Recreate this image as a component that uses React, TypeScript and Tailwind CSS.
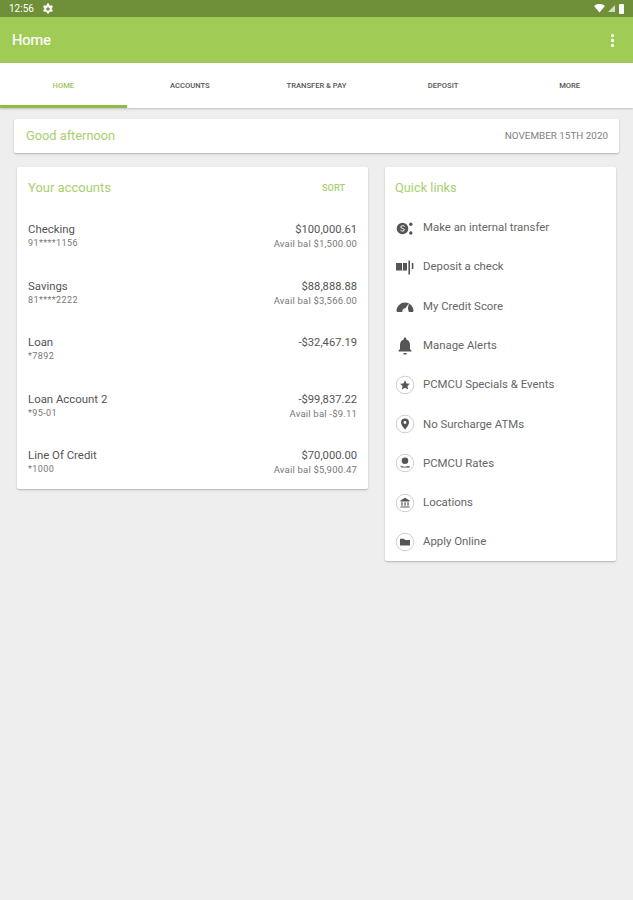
import { MoreVertical } from 'lucide-react';
import type { ReactNode } from 'react';

const TABS = ['HOME', 'ACCOUNTS', 'TRANSFER & PAY', 'DEPOSIT', 'MORE'];

const ACCOUNTS = [
  { name: 'Checking', num: '91****1156', amount: '$100,000.61', avail: 'Avail bal $1,500.00' },
  { name: 'Savings', num: '81****2222', amount: '$88,888.88', avail: 'Avail bal $3,566.00' },
  { name: 'Loan', num: '*7892', amount: '-$32,467.19', avail: '' },
  { name: 'Loan Account 2', num: '*95-01', amount: '-$99,837.22', avail: 'Avail bal -$9.11' },
  { name: 'Line Of Credit', num: '*1000', amount: '$70,000.00', avail: 'Avail bal $5,900.47' },
];

const Ring = ({ children }: { children: ReactNode }) => (
  <svg viewBox="0 0 20 20" className="w-5 h-5 text-[#555]" fill="currentColor">
    <circle cx="10" cy="10" r="8.8" fill="none" stroke="#c8c8c8" strokeWidth="0.9" />
    {children}
  </svg>
);

const LINKS: { label: string; icon: ReactNode }[] = [
  {
    label: 'Make an internal transfer',
    icon: (
      <svg viewBox="0 0 20 20" className="w-5 h-5 text-[#555]" fill="currentColor">
        <circle cx="7.5" cy="10.5" r="5.8" />
        <path d="M9.6 8.4c-.5-.8-3.6-1.2-3.8.6-.2 1.8 3.6 1 3.5 2.9-.1 1.6-3 1.4-3.8.4" fill="none" stroke="#fff" strokeWidth="1" />
        <circle cx="15.8" cy="6.2" r="1.7" />
        <circle cx="15.8" cy="15" r="1.7" />
      </svg>
    ),
  },
  {
    label: 'Deposit a check',
    icon: (
      <svg viewBox="0 0 20 20" className="w-5 h-5 text-[#555]" fill="currentColor">
        <rect x="1" y="6" width="11" height="7.5" />
        <rect x="7" y="6" width="0.9" height="7.5" fill="#fff" />
        <rect x="13.4" y="3.5" width="1.6" height="14" />
        <rect x="16.8" y="6" width="1.6" height="6" />
      </svg>
    ),
  },
  {
    label: 'My Credit Score',
    icon: (
      <svg viewBox="0 0 20 20" className="w-5 h-5 text-[#555]" fill="currentColor">
        <path d="M1.5 15a8.500 8.500 0 0 1 17 0l-.6 1h-4l-1-3.400 1-5.400-3.400 5a3.200 3.200 0 0 0-3.200 3.800H2.100z" />
      </svg>
    ),
  },
  {
    label: 'Manage Alerts',
    icon: (
      <svg viewBox="0 0 20 20" className="w-5 h-5 text-[#555]" fill="currentColor">
        <path d="M10 1.500a1.300 1.300 0 0 1 1.300 1.300v.7c2.400.7 3.700 2.900 3.700 5.400v4l1.500 1.800v.9h-13v-.9L5 12.900V8.900c0-2.500 1.300-4.700 3.700-5.400v-.7A1.300 1.300 0 0 1 10 1.500z" />
        <path d="M8.200 17h3.600a1.800 1.800 0 0 1-3.600 0z" />
      </svg>
    ),
  },
  {
    label: 'PCMCU Specials & Events',
    icon: (
      <Ring>
        <path d="M10 5.200l1.500 3.200 3.400.4-2.500 2.300.7 3.400-3.100-1.700-3.100 1.700.7-3.400-2.500-2.300 3.400-.4z" />
      </Ring>
    ),
  },
  {
    label: 'No Surcharge ATMs',
    icon: (
      <Ring>
        <path fillRule="evenodd" d="M10 4.500a4 4 0 0 1 4 4c0 2.800-4 7-4 7s-4-4.200-4-7a4 4 0 0 1 4-4zm0 2.600a1.400 1.400 0 1 0 0 2.800 1.400 1.400 0 0 0 0-2.800z" />
      </Ring>
    ),
  },
  {
    label: 'PCMCU Rates',
    icon: (
      <Ring>
        <circle cx="10" cy="7.800" r="3.300" />
        <path d="M5 12.500c2 1.200 5 1.600 8 .6l1.800.1-.2 1.200H6.500z" />
      </Ring>
    ),
  },
  {
    label: 'Locations',
    icon: (
      <Ring>
        <path d="M10 4.800l4.600 2.600v1H5.400v-1z" />
        <path d="M6.400 9.200h1.200v3.600H6.400zM9.400 9.200h1.200v3.600H9.400zM12.400 9.200h1.200v3.600h-1.200zM5.400 13.400h9.200v1.200H5.400z" />
      </Ring>
    ),
  },
  {
    label: 'Apply Online',
    icon: (
      <Ring>
        <path d="M5 6.800h4l1 1.200h5v5.600H5z" />
      </Ring>
    ),
  },
];

export default function App() {
  return (
    <div className="w-[633px] h-[900px] flex flex-col bg-[#eeeeee] font-['Roboto',sans-serif] overflow-hidden">
      <div className="h-[17px] bg-[#6f9039] flex items-center justify-between pl-[9px] pr-[9px] text-white">
        <div className="flex items-center gap-[8px]">
          <span className="text-[10px] leading-none">12:56</span>
          <svg viewBox="0 0 24 24" className="w-[12px] h-[12px]" fill="currentColor">
            <path fillRule="evenodd" d="M10 1h4l.6 3 2.300 1.300 2.900-1 2 3.500-2.300 2 0 2.600 2.300 2-2 3.500-2.900-1-2.300 1.300-.6 3h-4l-.6-3-2.300-1.300-2.900 1-2-3.500 2.300-2 0-2.600-2.300-2 2-3.500 2.900 1L9.400 4zM12 8.500a3.500 3.500 0 1 0 0 7 3.500 3.500 0 0 0 0-7z" />
          </svg>
        </div>
        <div className="flex items-center gap-[3px]">
          <svg viewBox="0 0 12 10" className="w-[11px] h-[9px]" fill="currentColor">
            <path d="M0 2.200C3.400-.7 8.600-.7 12 2.200L6 9.500z" />
          </svg>
          <svg viewBox="0 0 8 8" className="w-[7px] h-[7px] opacity-70" fill="currentColor">
            <path d="M8 0v8H0z" />
          </svg>
          <div className="w-[5px] h-[10px] bg-white rounded-[1px] ml-[1px]" />
        </div>
      </div>

      <div className="h-[46px] bg-[#a0cb55] flex items-center justify-between pl-3 pr-[15px]">
        <span className="text-[14.5px] text-white pt-[1px] [-webkit-text-stroke:0.2px_white]">Home</span>
        <MoreVertical size={17} strokeWidth={2.6} className="text-white mr-[-3px]" />
      </div>

      <div className="h-[45px] bg-white flex shadow-[0_1px_2px_rgba(0,0,0,0.2)]">
        {TABS.map((t, i) => (
          <div
            key={t}
            className={`flex-1 flex items-center justify-center border-b-[3px] pt-[4px] text-[7.6px] font-medium ${
              i === 0 ? 'border-[#8fbc45] text-[#9cc75a]' : 'border-transparent text-[#555]'
            }`}
          >
            {t}
          </div>
        ))}
      </div>

      <div className="mt-[11px] mx-[14px] h-[34px] bg-white rounded-[2px] shadow-[0_1px_2px_rgba(0,0,0,0.25)] flex items-center justify-between pl-3 pr-[11px]">
        <span className="text-[12.8px] text-[#a9cf70]">Good afternoon</span>
        <span className="text-[9.9px] text-[#808080]">NOVEMBER 15TH 2020</span>
      </div>

      <div className="mt-[14px] mx-[17px] flex items-start gap-[17px]">
        <div className="w-[351px] h-[322px] bg-white rounded-[2px] shadow-[0_1px_2px_rgba(0,0,0,0.25)] pl-[11px] pr-[11px]">
          <div className="h-[42px] flex items-center justify-between">
            <span className="text-[13px] text-[#a9cf70]">Your accounts</span>
            <span className="text-[9.2px] font-medium text-[#a9cf70] mr-[12px]">SORT</span>
          </div>
          <div className="mt-[13px] flex flex-col gap-[28.5px]">
            {ACCOUNTS.map(a => (
              <div key={a.name} className="flex justify-between h-[28px]">
                <div className="flex flex-col">
                  <span className="text-[11.4px] leading-[15px] text-[#555]">{a.name}</span>
                  <span className="text-[9px] leading-[13px] text-[#777] tracking-[0.4px]">{a.num}</span>
                </div>
                <div className="flex flex-col items-end">
                  <span className="text-[11.2px] leading-[15px] text-[#555]">{a.amount}</span>
                  <span className="text-[9.5px] leading-[13px] text-[#777] tracking-[0.2px]">{a.avail}</span>
                </div>
              </div>
            ))}
          </div>
        </div>

        <div className="w-[231px] h-[394px] bg-white rounded-[2px] shadow-[0_1px_2px_rgba(0,0,0,0.25)] pl-[10px]">
          <div className="h-[42px] flex items-center">
            <span className="text-[12.8px] text-[#a9cf70]">Quick links</span>
          </div>
          <div className="flex flex-col -mt-[1px]">
            {LINKS.map(l => (
              <div key={l.label} className="h-[39.3px] flex items-center gap-[8px]">
                {l.icon}
                <span className="text-[11.4px] text-[#666]">{l.label}</span>
              </div>
            ))}
          </div>
        </div>
      </div>
    </div>
  );
}
